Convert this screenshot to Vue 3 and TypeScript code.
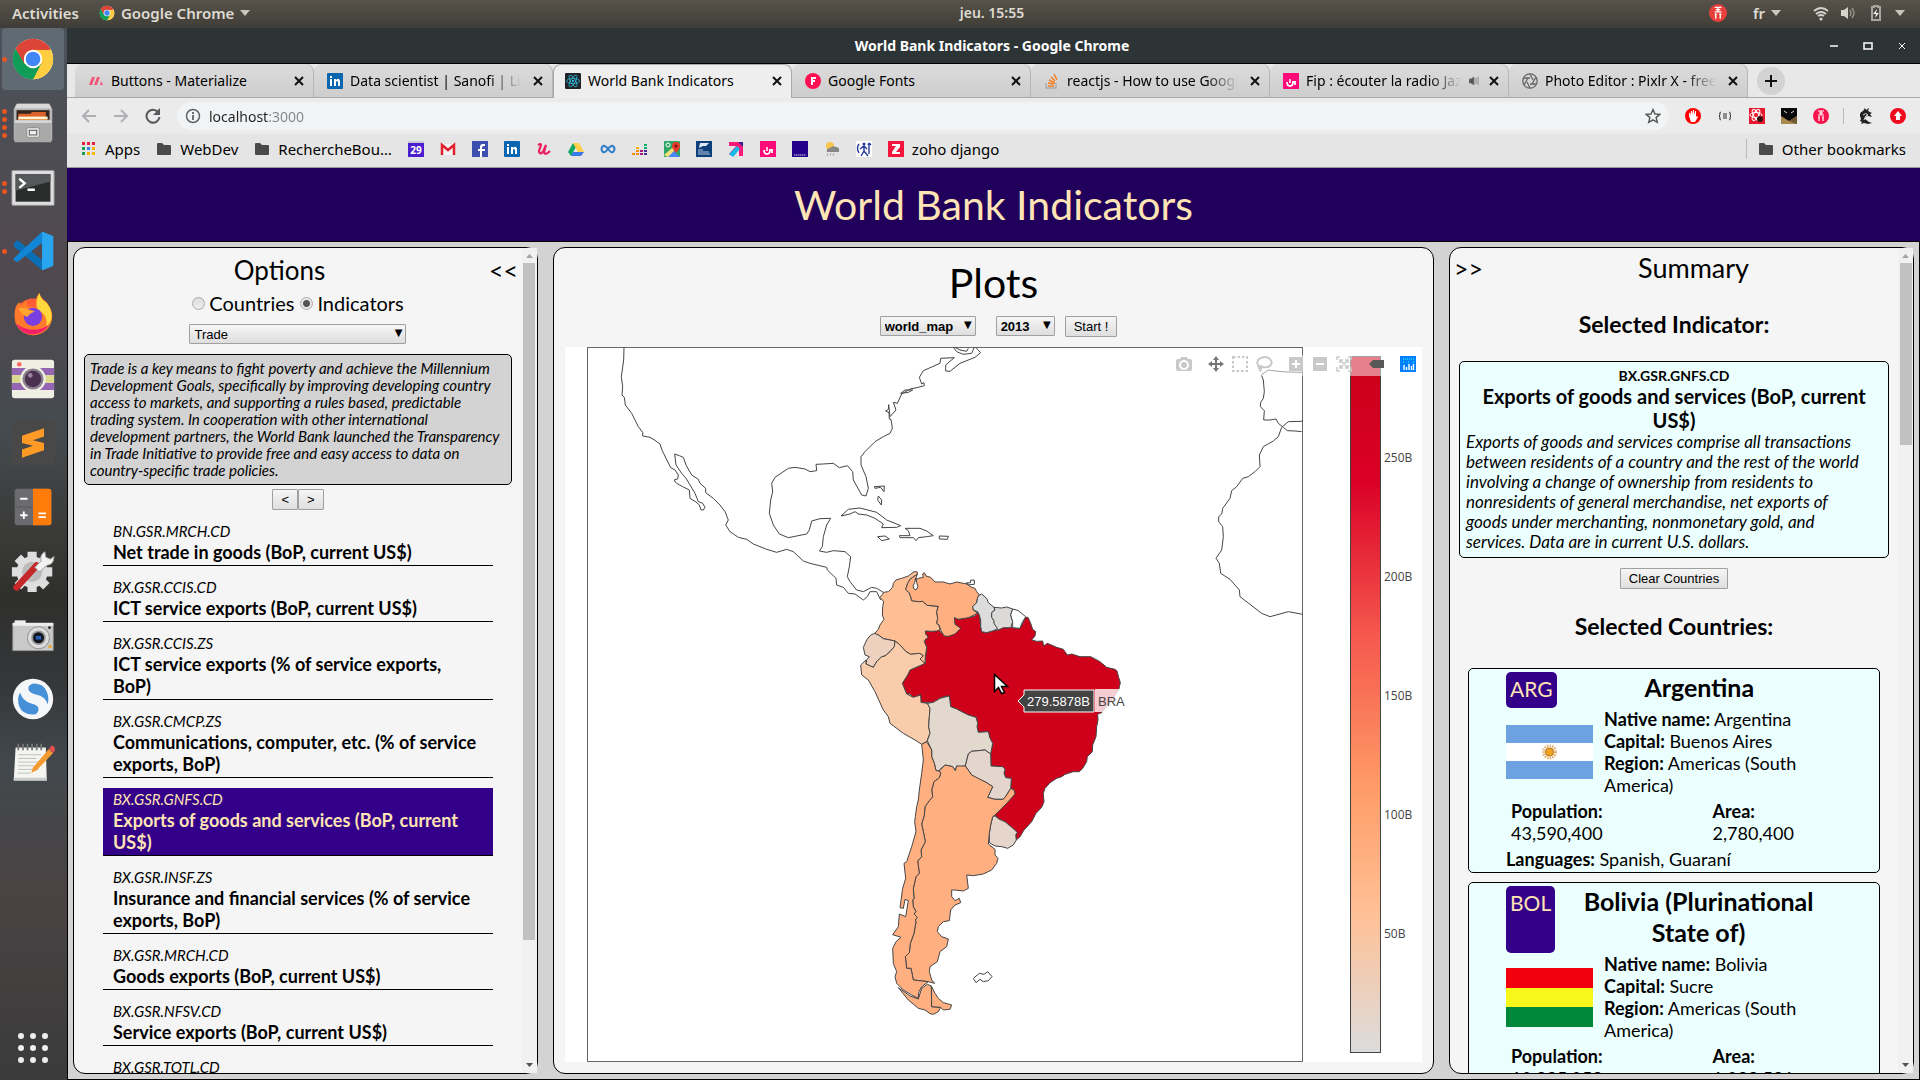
<script setup lang="ts">
import { ref } from 'vue'

interface DockItem { name: string; windows: number; art: string }
interface Tab { title: string; art: string; active?: boolean; fades?: boolean; sound?: boolean }
interface Bookmark { name: string; art: string; label?: string; wide?: boolean }
interface Indicator { code: string; name: string }
interface Country {
  code: string; name: string; native: string; capital: string; region: string[]
  population: string; area: string; languages: string; flag: string; flagBox: string
}

const chromeArt =
  '<circle cx="24" cy="24" r="22" fill="#fff"/><path d="M24 24 4.900 13A22 22 0 0 1 43 13z" fill="#db4437"/><path d="M24 24 43 13A22 22 0 0 1 24 46z" fill="#ffcd40"/><path d="M24 24 43.500 14H24L14 29 24 46 34 29z" fill="#ffcd40"/><path d="M5 13A22 22 0 0 0 24 46L33 29 24 33 14.500 29z" fill="#0f9d58"/><path d="M5 13A22 22 0 0 1 43 14H24L15 20 14 29z" fill="#db4437"/><path d="M5 13 15 30 19 35 29 36 24 46A22 22 0 0 1 5 13z" fill="#0f9d58"/><circle cx="24" cy="24" r="10" fill="#fff"/><circle cx="24" cy="24" r="8" fill="#4285f4"/>'

const folderArt = '<path d="M1 3q0-1 1-1h4l2 2h6q1 0 1 1v8q0 1-1 1H2q-1 0-1-1z" fill="#4a4a4a"/>'
const fipArt = '<rect width="16" height="16" fill="#ff0a78"/><path d="M4 9q0 4 3 4t3-4h2v3" fill="none" stroke="#fff" stroke-width="1.800"/><path d="M7 6v4" stroke="#fff" stroke-width="1.500"/>'
const linkedinArt = '<rect width="16" height="16" rx="1" fill="#0a66b0"/><path d="M3 6h2v7H3zM3 3h2v2H3zM7 6h2v1q3-3 4 1v5h-2V9q-1-2-2 0v4H7z" fill="#fff"/>'
const meepleArt = '<circle cx="8" cy="8" r="8" fill="#f5144b"/><path d="M5 3h6M8 3v4M5 7h6M6 5h4M6 9v4M10 9v4M5 9h2M9 9h2" stroke="#fff" stroke-width="1.200" fill="none"/>'
const recorderArt = '<circle cx="8" cy="8" r="8" fill="#e8403c"/><path d="M5 3h6M8 3v4M5 7h6M6 5h4M6 9v4M10 9v4M5 9h2M9 9h2" stroke="#fff" stroke-width="1.200" fill="none"/>'

const dock: DockItem[] = [
  { name: 'Google Chrome', windows: 1, art: chromeArt },
  { name: 'Files', windows: 4, art: '<path d="M6 3h36l3 6v34H3V9z" fill="#b9b9b9"/><path d="M7 3h34l3 5H4z" fill="#d9d9d9"/><rect x="6" y="10" width="36" height="12" fill="#33241c"/><path d="M8 14h13l2-2h15v12H8z" fill="#d9632a"/><path d="M8 17h32v3H8z" fill="#fff3d6"/><path d="M7 20h34v4H7z" fill="#f0a04c"/><path d="M4 21h40v24H4z" fill="#a9a9a9"/><path d="M4 21h40v3H4z" fill="#d6d6d6"/><rect x="17" y="29" width="14" height="11" rx="2" fill="#ddd" stroke="#8b8b8b"/><rect x="20" y="32" width="8" height="5" fill="#eee" stroke="#555"/>' },
  { name: 'Terminal', windows: 2, art: '<rect x="1" y="6" width="46" height="38" rx="1" fill="#ddd" stroke="#999"/><rect x="5" y="10" width="38" height="30" fill="#2b2d2d"/><path d="M5 10h38v8L5 28z" fill="#56595a"/><path d="m9 15 6 5-6 5M18 27h8" fill="none" stroke="#fff" stroke-width="2.500"/>' },
  { name: 'Visual Studio Code', windows: 1, art: '<path d="M34 3 46 8v32l-12 5z" fill="#2aa6f0"/><path d="M3 16 7 12 34 34v11L3 19z" fill="#0b6fb8"/><path d="M3 32 34 3v12L7 36 3 34z" fill="#1286d6"/><path d="M34 3 46 8v32l-12 5z" fill="#2aa6f0"/>' },
  { name: 'Firefox', windows: 0, art: '<circle cx="24" cy="26" r="20" fill="#ff5a36"/><path d="M4 26Q3 15 9 10l3 4q2-5 5-6l1 6 9 2q-2-10 4-16 2 6 7 9 7 8 7 17A21 20 0 0 1 24 46Q10 45 5 33z" fill="#ff7a2b"/><path d="M31 0q1 7 8 11 7 9 5 18-2 6-6 9 4-13-9-20-3-9 2-18z" fill="#ffd83d"/><circle cx="24" cy="26" r="10" fill="#7a3fe0"/><path d="M8 17q9-2 11 1l7 2q-5 2-8 6-6-1-10-9z" fill="#ffa531"/><path d="M5 33q7 13 20 12 11-1 17-11-8 6-18 6T5 33z" fill="#f31f6a"/>' },
  { name: 'Screenshot', windows: 0, art: '<rect x="1" y="3" width="46" height="42" rx="3" fill="#efefe4"/><path d="M1 12h46v8H1zM1 28h46v8H1z" fill="#9465b3"/><path d="M1 20h46v8H1z" fill="#dbd98b"/><circle cx="9" cy="8" r="2.500" fill="#f66"/><circle cx="24" cy="24" r="14" fill="#efefe4"/><circle cx="24" cy="24" r="11.500" fill="#8c7f8f"/><circle cx="24" cy="24" r="9" fill="#4a3150"/><circle cx="21" cy="20" r="2.500" fill="#9c86a3"/>' },
  { name: 'Sublime Text', windows: 0, art: '<rect width="48" height="48" rx="4" fill="#484848"/><path d="m12 16 24-8v9l-12 4 12 3v8L12 40v-9l12-4-12-3z" fill="#ff9a26"/>' },
  { name: 'Calculator', windows: 0, art: '<rect x="4" y="4" width="40" height="40" rx="3" fill="#6b6b70"/><path d="M24 4h17q3 0 3 3v34q0 3-3 3H24z" fill="#ff7b0a"/><path d="M4 24h20" stroke="#55555a"/><path d="M10 15h8M10 33h8M14 29v8M30 31h8M30 35h8" stroke="#fff" stroke-width="2"/>' },
  { name: 'Settings', windows: 0, art: '<g fill="#dedede"><circle cx="23" cy="25" r="17"/><path d="M18 3h10v44H18zM1 20h44v10H1z"/><path d="M18 3h10v44H18z" transform="rotate(45 23 25)"/><path d="M18 3h10v44H18z" transform="rotate(-45 23 25)"/></g><circle cx="23" cy="25" r="11" fill="#bcbcbc"/><path d="M6 42 28 18" stroke="#c4282a" stroke-width="7" stroke-linecap="round"/><path d="m26 20 7-7q-2-7 4-10l1 6 5 2 4-3q0 9-8 10l-8 7z" fill="#f2f2f2" stroke="#999"/>' },
  { name: 'Camera', windows: 0, art: '<path d="M2 11h44v30H2z" fill="#c9c9c9" stroke="#999"/><path d="M4 8h12v3H4z" fill="#eee"/><path d="M2 11h44v3H2z" fill="#eee"/><circle cx="30" cy="27" r="12" fill="#ddd" stroke="#888"/><circle cx="30" cy="27" r="8" fill="#999"/><circle cx="30" cy="27" r="6" fill="#10151f"/><path d="M27 25h6v4h-6z" fill="#245fb0"/><path d="M41 35h3v3h-3z" fill="#f0a020"/><circle cx="42" cy="16" r="1.500" fill="#222"/>' },
  { name: 'Simplenote', windows: 0, art: '<circle cx="24" cy="24" r="22" fill="#f4f6f8"/><path d="M24 7q12 0 15 9 3 7 1 14-2-9-13-11-9-2-8-8 1-3 5-4z" fill="#4690d8"/><path d="M24 41Q12 41 9 32q-3-8 1-15 2 9 12 12 9 2 8 7t-6 5z" fill="#4690d8"/>' },
  { name: 'Notes', windows: 0, art: '<path d="M5 7h33l1 36H3z" fill="#f4f4f0"/><path d="M3 40h36v3H3z" fill="#ccc"/><path d="M8 3v7M13 3v7M18 3v7M23 3v7M28 3v7M33 3v7" stroke="#777" stroke-width="2"/><path d="M8 15h25M8 19h20M8 23h24M8 27h17M8 31h22M7 35h14" stroke="#bbb"/><path d="m24 29 17-20 5 4-18 19-6 3z" fill="#f29a30"/><path d="m41 9 3-4q4 0 4 5l-2 3z" fill="#e05050"/>' },
]

const tabs: Tab[] = [
  { title: 'Buttons - Materialize', art: '<path d="M1 12 4 4h3L4 12zM6 12 9 4h3L9 12zM12 12l1-4 2 4z" fill="#f5557b"/>' },
  { title: 'Data scientist | Sanofi | LinkedIn', fades: true, art: linkedinArt },
  { title: 'World Bank Indicators', active: true, art: '<rect width="16" height="16" rx="1" fill="#20232a"/><g fill="none" stroke="#2fb7d6" stroke-width=".8"><ellipse cx="8" cy="8" rx="6.500" ry="2.500"/><ellipse cx="8" cy="8" rx="6.500" ry="2.500" transform="rotate(60 8 8)"/><ellipse cx="8" cy="8" rx="6.500" ry="2.500" transform="rotate(120 8 8)"/></g><circle cx="8" cy="8" r="1.200" fill="#2fb7d6"/>' },
  { title: 'Google Fonts', art: '<circle cx="8" cy="8" r="8" fill="#ff1053"/><path d="M6 12V4h5v2H8v1h2v2H8v3z" fill="#fff"/>' },
  { title: 'reactjs - How to use Google Fonts', fades: true, art: '<path d="M2 10v5h10v-5" fill="none" stroke="#aaa" stroke-width="1.500"/><path d="M4 13h6M4 10l6 1M5 7l6 3M7 4l4 4M10 1l3 6" stroke="#f48024" stroke-width="1.500"/>' },
  { title: 'Fip : écouter la radio Jazz', fades: true, sound: true, art: fipArt },
  { title: 'Photo Editor : Pixlr X - free image', fades: true, art: '<g fill="none" stroke="#666" stroke-width="1.300"><circle cx="8" cy="8" r="7.200"/><path d="M8 1 11 7M14 4l-4 7M14 11H8M8 15 5 9M2 12l4-7M2 5h6"/></g>' },
]

const bookmarks: Bookmark[] = [
  { name: 'Apps', label: 'Apps', wide: true, art: '<path d="M1 1h3v3H1zM6 1h3v3H6z" fill="#e8203c"/><path d="M11 1h3v3h-3z" fill="#e8203c"/><path d="M1 6h3v3H1z" fill="#18a050"/><path d="M6 6h3v3H6z" fill="#3f80f0"/><path d="M11 6h3v3h-3zM6 11h3v3H6zM11 11h3v3h-3z" fill="#f8b400"/><path d="M1 11h3v3H1z" fill="#18a050"/>' },
  { name: 'WebDev', label: 'WebDev', wide: true, art: folderArt },
  { name: 'RechercheBoulot', label: 'RechercheBou…', wide: true, art: folderArt },
  { name: 'Calendar', art: '<rect y="1" width="16" height="15" fill="#4b1fd0"/><path d="M0 0h16v2H0z" fill="#c9c9d8"/><text x="8" y="13" text-anchor="middle" font-family="Noto Sans, sans-serif" font-size="10" font-weight="700" fill="#fff">29</text>' },
  { name: 'Gmail', art: '<path d="M1 3h14v11H1z" fill="#f4f4f4"/><path d="M2 14V4l6 5 6-5v10" fill="none" stroke="#e0202f" stroke-width="2.500"/>' },
  { name: 'Facebook', art: '<rect width="16" height="16" fill="#3d50b0"/><path d="M8 16v-6H6V8h2V6q0-3 3-3h2v2h-1q-2 0-2 2v1h3v2h-3v6z" fill="#fff"/>' },
  { name: 'LinkedIn', art: linkedinArt },
  { name: 'Udemy', art: '<path d="M2 4q3-2 3 0L3 10q0 4 4 1l3-7-2 7q1 4 6-1" fill="none" stroke="#ee1f60" stroke-width="2.200"/>' },
  { name: 'Drive', art: '<path d="m5 2-5 9 3 4 5-9z" fill="#11a861"/><path d="M5 2h6l5 9h-6z" fill="#ffcf48"/><path d="M3 15h10l3-4H5z" fill="#3b78e7"/>' },
  { name: 'Codingame', art: '<path d="M8 8Q5 4 3 5q-3 3 0 6 2 1 5-3 3-4 5-3 3 3 0 6-2 1-5-3z" fill="none" stroke="#2f7ec8" stroke-width="2"/>' },
  { name: 'Deezer', art: '<path d="M0 12h3v2H0zM4 12h3v2H4zM4 9h3v2H4z" fill="#ff8a00"/><path d="M4 6h3v2H4z" fill="#ffb000"/><path d="M8 12h3v2H8zM8 9h3v2H8z" fill="#a01a80"/><path d="M12 12h3v2h-3zM12 9h3v2h-3z" fill="#4a2f9a"/><path d="M12 6h3v2h-3zM12 3h3v2h-3z" fill="#10b070"/>' },
  { name: 'Maps', art: '<rect width="16" height="16" rx="1" fill="#2fa565"/><path d="m3 16 6-7 7 7z" fill="#4486f4"/><path d="M0 14 14 2l2 2L4 16z" fill="#f9e27a"/><path d="M12 1q4 0 4 4 0 3-4 7-4-4-4-7 0-4 4-4z" fill="#e33b2e"/><circle cx="12" cy="5" r="1.500" fill="#801010"/><circle cx="4" cy="4" r="2" fill="none" stroke="#fff"/>' },
  { name: 'La Banque Postale', art: '<rect width="16" height="16" fill="#0d3f7a"/><path d="M4 2h9l-3 3H7l-4 2z" fill="#dfe9f5"/><path d="M2 9h5M2 11h11M2 13h12" stroke="#b5c8e0"/>' },
  { name: 'Arrow', art: '<path d="M1 1h14v14h-4V7L5 15l-4-2 7-8H1z" fill="#ff1a7a"/><path d="m1 13 8-8 3 3-7 8z" fill="#18b8e8"/><path d="M10 1h5v5z" fill="#3b1d90"/>' },
  { name: 'Fip', art: fipArt },
  { name: 'Hammer', art: '<rect width="16" height="16" fill="#24008a"/><path d="M2 14h12" stroke="#d0c8f0" stroke-dasharray="1.500 .5"/>' },
  { name: 'Weather', art: '<circle cx="6" cy="5" r="4" fill="#f7c64a"/><path d="M3 11q-1-4 3-4 2-3 6-1 4 0 3 5z" fill="#888"/><path d="m4 12-1 3M7 12l-1 3M10 12l-1 3" stroke="#aaa"/>' },
  { name: 'Runner', art: '<rect width="16" height="16" fill="#fff"/><circle cx="8" cy="3" r="1.500" fill="#253a9a"/><path d="M8 5v5l-3 5M8 10l4 5M4 8l4-3 3 3M3 3q-3 4 0 9M13 13V2l-1 2M13 2l2 2" fill="none" stroke="#253a9a" stroke-width="1.400"/>' },
  { name: 'zoho django', label: 'zoho django', wide: true, art: '<rect width="16" height="16" fill="#f5143c"/><path d="M4 3h8v3l-4 5h4v2H4v-2l4-6H4z" fill="#fff"/>' },
]

const extensions: Bookmark[] = [
  { name: 'Ad block', art: '<circle cx="8" cy="8" r="8" fill="#f00"/><path d="M4 8V5h1v3l1-5h1v4l1-5h1v5l1-4h1v6l1-1 1 1-3 5H6z" fill="#fff"/>' },
  { name: 'JSON view', art: '<path d="M4 4Q2 4 3 7L2 8l1 1q-1 3 1 3M12 4q2 0 1 3l1 1-1 1q1 3-1 3M6 6h4M6 8h4M6 10h4" fill="none" stroke="#333"/>' },
  { name: 'React tools', art: '<rect width="16" height="16" fill="#e8182e"/><g fill="none" stroke="#fff"><ellipse cx="7" cy="7" rx="6" ry="2.500"/><ellipse cx="7" cy="7" rx="6" ry="2.500" transform="rotate(60 7 7)"/><ellipse cx="7" cy="7" rx="6" ry="2.500" transform="rotate(120 7 7)"/></g><circle cx="11" cy="11" r="3" fill="#301010"/>' },
  { name: 'Fox', art: '<rect width="16" height="16" fill="#0a0a0a"/><path d="m0 8 8 5 8-5v8H0z" fill="#a8894e"/><path d="m8 13 8-5v8z" fill="#6e5830"/><path d="m3 3 3 2M13 3l-3 2" stroke="#ddd"/>' },
  { name: 'Meeple', art: meepleArt },
]

const indicators: Indicator[] = [
  { code: 'BN.GSR.MRCH.CD', name: 'Net trade in goods (BoP, current US$)' },
  { code: 'BX.GSR.CCIS.CD', name: 'ICT service exports (BoP, current US$)' },
  { code: 'BX.GSR.CCIS.ZS', name: 'ICT service exports (% of service exports,\nBoP)' },
  { code: 'BX.GSR.CMCP.ZS', name: 'Communications, computer, etc. (% of service\nexports, BoP)' },
  { code: 'BX.GSR.GNFS.CD', name: 'Exports of goods and services (BoP, current\nUS$)' },
  { code: 'BX.GSR.INSF.ZS', name: 'Insurance and financial services (% of service\nexports, BoP)' },
  { code: 'BX.GSR.MRCH.CD', name: 'Goods exports (BoP, current US$)' },
  { code: 'BX.GSR.NFSV.CD', name: 'Service exports (BoP, current US$)' },
  { code: 'BX.GSR.TOTL.CD', name: 'Exports of goods, services and primary income' },
]

const topicText = `Trade is a key means to fight poverty and achieve the Millennium
Development Goals, specifically by improving developing country
access to markets, and supporting a rules based, predictable
trading system. In cooperation with other international
development partners, the World Bank launched the Transparency
in Trade Initiative to provide free and easy access to data on
country-specific trade policies.`

const indicatorText = `Exports of goods and services comprise all transactions
between residents of a country and the rest of the world
involving a change of ownership from residents to
nonresidents of general merchandise, net exports of
goods under merchanting, nonmonetary gold, and
services. Data are in current U.S. dollars.`

const countries: Country[] = [
  {
    code: 'ARG', name: 'Argentina', native: 'Argentina', capital: 'Buenos Aires', region: ['Americas (South', 'America)'],
    population: '43,590,400', area: '2,780,400', languages: 'Spanish, Guaraní', flagBox: '0 0 87 54',
    flag: '<path d="M0 0h87v54H0z" fill="#6ca2e0"/><path d="M0 18h87v18H0z" fill="#fff"/><circle cx="43.500" cy="27" r="6" fill="none" stroke="#e3b27a" stroke-width="3" stroke-dasharray="1.500 1"/><circle cx="43.500" cy="27" r="4" fill="#f2a51e" stroke="#b9741c"/>',
  },
  {
    code: 'BOL', name: 'Bolivia (Plurinational\nState of)', native: 'Bolivia', capital: 'Sucre', region: ['Americas (South', 'America)'],
    population: '10,985,059', area: '1,098,581', languages: 'Spanish, Aymara, Quechua', flagBox: '0 0 87 59',
    flag: '<path d="M0 0h87v59H0z" fill="#f3000f"/><path d="M0 20h87v39H0z" fill="#f7f71c"/><path d="M0 39h87v20H0z" fill="#00883a"/>',
  },
]

/* Country outlines, drawn at three units per plot pixel. */
const lands = [
  { id: 'BRA', fill: '#ce001a', d: 'M557 172 564 172 572 190 578 208 587 215 585 228 575 240 590 244 608 243 611 258 622 250 650 262 670 268 682 285 695 282 720 290 752 290 780 305 800 322 825 328 831 333 836 352 841 368 836 390 820 415 800 440 785 458 773 462 774 480 770 500 768 530 758 555 757 575 742 590 740 605 728 625 718 635 700 635 675 643 665 650 650 655 630 668 615 685 610 700 612 725 605 742 588 760 575 785 552 810 540 830 529 840 527 825 532 817 515 802 495 785 478 778 465 765 480 748 500 730 525 702 522 690 512 685 514 655 497 653 492 640 495 628 488 620 453 618 452 580 458 550 450 535 445 515 415 517 411 500 413 490 408 472 385 465 365 455 350 447 332 440 328 408 315 409 300 415 280 427 243 427 242 405 220 412 210 402 200 402 187 370 203 345 210 330 240 317 255 310 260 262 253 245 256 238 265 232 257 222 256 213 275 214 297 210 303 218 325 229 345 222 362 205 345 193 343 173 355 178 385 173 405 168 413 155 418 165 420 180 422 200 425 215 440 218 460 212 475 210 487 202 500 204 512 201 525 205 540 205 548 190z' },
  { id: 'COL', fill: '#ffbf95', d: 'M130 97 145 95 158 82 160 70 168 60 185 55 205 48 222 35 232 36 232 43 218 52 210 58 203 70 197 88 207 98 212 110 215 122 235 125 248 124 262 136 295 139 290 155 293 175 290 190 297 195 300 210 290 213 275 214 256 213 257 222 265 232 256 238 253 245 260 262 256 290 255 310 248 305 240 297 250 287 238 280 212 283 198 275 180 255 165 243 150 240 130 236 115 225 104 220 115 208 120 195 132 178 127 165 128 140 131 125 120 112 128 103z' },
  { id: 'VEN', fill: '#ffaf80', d: 'M232 43 218 52 210 58 203 70 197 88 207 98 212 110 215 122 235 125 248 124 262 136 295 139 290 155 293 175 290 190 297 195 303 212 312 228 325 229 345 222 362 205 345 193 343 173 355 178 385 173 413 160 400 150 398 140 410 128 413 112 418 105 410 95 405 85 395 82 380 72 350 66 330 72 310 66 285 66 272 52 258 48 253 38 248 42 250 52 235 55 225 60z' },
  { id: 'GUY', fill: '#dcdcdc', d: 'M418 105 425 102 440 115 445 128 462 142 465 150 455 158 455 172 462 182 463 190 475 205 460 212 440 218 425 215 422 200 422 180 418 165 413 155 400 150 398 140 410 128 413 112z' },
  { id: 'SUR', fill: '#dbdad9', d: 'M462 142 485 144 500 141 518 147 512 165 518 185 512 203 490 203 475 210 462 190 462 182 455 172 455 158 465 150z' },
  { id: 'GUF', fill: '#fff', d: 'M518 147 535 152 557 170 545 190 540 205 518 203 518 185 512 165z' },
  { id: 'ECU', fill: '#edd0be', d: 'M104 220 115 225 130 236 150 240 165 243 163 260 150 275 135 288 125 290 110 305 100 322 90 318 78 312 80 300 88 290 75 285 70 262 80 240 92 225z' },
  { id: 'PER', fill: '#f9ccac', d: 'M165 243 180 255 198 275 212 283 238 280 250 287 240 297 255 310 240 317 210 330 203 345 187 370 200 402 220 412 242 405 243 427 262 430 270 445 268 470 266 500 270 520 260 545 245 553 225 540 190 520 150 490 145 470 130 450 105 395 85 360 65 345 62 315 78 300 78 312 100 322 110 305 125 290 135 288 150 275 163 260z' },
  { id: 'BOL', fill: '#e2d8ce', d: 'M262 430 280 427 300 415 328 408 332 440 350 447 365 455 385 465 408 472 413 490 411 500 415 517 445 515 450 535 458 550 452 582 435 570 395 574 385 582 376 618 360 620 350 618 346 632 338 620 315 615 300 628 298 633 288 632 283 610 275 590 275 570 262 542 270 520 266 500 268 470 270 445z' },
  { id: 'PRY', fill: '#e4d6cd', d: 'M385 582 395 574 435 570 452 582 453 618 488 620 495 628 492 640 497 653 514 655 512 685 500 705 490 718 465 718 443 712 458 680 440 668 410 655 395 645 376 618z' },
  { id: 'URY', fill: '#e6d5ca', d: 'M465 768 478 778 495 785 515 802 532 817 527 825 529 840 520 855 503 865 485 860 465 858 448 848 448 820 452 795 458 770z' },
  { id: 'ARG', fill: '#ffaf80', d: 'M298 633 315 615 338 620 346 632 350 618 376 618 395 645 440 668 458 680 443 712 465 718 490 718 500 705 512 685 522 690 525 702 500 730 465 765 458 770 452 795 448 820 445 852 465 868 465 885 474 895 470 910 455 930 430 942 400 947 380 945 385 985 370 993 345 990 335 990 335 1010 345 1022 358 1015 362 1028 345 1035 332 1050 328 1082 310 1085 295 1100 292 1115 305 1130 325 1137 320 1160 300 1175 292 1205 270 1220 268 1235 275 1260 284 1270 265 1265 220 1260 213 1225 200 1225 196 1190 208 1178 211 1150 222 1120 228 1085 226 1080 232 1072 222 1062 228 1055 220 1040 218 1020 222 1015 220 985 228 950 238 940 233 903 245 890 243 870 256 845 250 815 245 792 253 765 255 740 268 722 278 710 275 690 282 665 298 653 302 640z' },
  { id: 'CHL', fill: '#ffaf80', d: 'M260 545 275 570 275 590 283 610 288 632 298 633 302 640 298 653 282 665 275 690 278 710 268 722 255 740 253 765 245 792 250 815 256 845 243 870 245 890 233 903 238 940 228 950 220 985 222 1015 218 1020 220 1040 228 1055 222 1062 232 1072 226 1080 228 1085 222 1120 211 1150 208 1178 196 1190 200 1225 213 1225 220 1260 265 1265 245 1280 237 1295 234 1315 215 1305 190 1290 170 1270 165 1250 170 1235 160 1210 158 1165 168 1145 183 1132 158 1124 175 1100 178 1062 197 1070 205 1022 195 1018 190 1045 180 1043 188 985 197 955 192 910 200 905 215 860 228 815 224 785 226 770 230 740 235 720 238 690 245 640 250 600 247 570 245 553z' },
  { id: 'CHL-TDF', fill: '#ffaf80', d: 'M175 1283 210 1308 235 1317 245 1285 262 1273 274 1278 275 1340 302 1342 295 1355 280 1363 270 1361 255 1350 235 1345 205 1320z' },
  { id: 'ARG-TDF', fill: '#ffaf80', d: 'M274 1278 285 1300 295 1315 310 1328 335 1335 330 1348 310 1350 302 1342 275 1340z' },
  { id: 'FLK', fill: '#fff', d: 'M400 1255 418 1240 432 1243 443 1235 456 1250 445 1262 430 1265 420 1258 408 1268z' },
  { id: 'MAR', fill: '#fff', d: 'M228 54 224 68 219 78 222 87 228 90 234 80 230 68z' },
  { id: 'TTO', fill: '#fff', d: 'M378 69 392 68 391 61 403 60 403 73 388 74z' },
]

const northCoasts = [
  'M192 322 191 360 184 410 188 440 186 465 193 472 196 495 215 520 235 560 248 577 248 588 270 592 282 599 300 612 306 630 318 655 332 683 345 690 355 705 353 717 342 720 350 730 368 740 388 750 390 775 408 786 418 795 423 810 430 810 435 802 428 790 415 785 405 760 390 735 378 715 365 700 348 675 344 642 358 647 370 652 378 675 395 705 415 718 420 730 437 745 437 758 460 775 480 795 495 815 505 840 497 855 510 875 535 892 560 898 580 912 620 928 650 937 680 928 700 935 730 963 750 970 800 982 802 990 828 1015 830 1035 850 1042 865 1060 885 1062 910 1080 922 1070 930 1055 950 1055 962 1080',
  'M970 1057 950 1045 935 1042 910 1055 890 1050 870 1025 862 1010 868 980 872 950 855 935 820 932 800 937 778 933 787 920 790 890 800 855 812 835 780 836 755 843 748 870 740 882 685 893 658 882 640 855 628 820 632 780 638 755 635 730 645 712 685 685 705 682 735 687 750 695 770 692 768 673 790 672 820 670 838 683 862 677 878 695 880 720 905 765 918 768 925 745 918 710 903 675 903 650 915 635 945 605 970 590 990 580 997 565 993 538 988 537 987 518 977 513 985 508 986 494 990 530 1008 510 1000 487 1012 490 1025 462 1050 447 1075 442 1093 437 1092 428 1085 432 1078 412 1090 392 1140 370 1142 355 1183 353 1157 375 1157 393 1170 394 1200 370 1245 352 1262 338 1247 322',
  'M1022 460 1035 450 1058 450 1045 457z',
  'M1180 322 1190 335 1210 343 1235 340 1243 322M1185 322 1200 330 1220 334 1225 325',
  'M843 828 865 808 900 804 950 817 980 840 1022 857 1010 862 965 863 970 852 945 835 920 825 895 822 885 815 870 822z',
  'M1035 865 1080 865 1100 873 1120 887 1100 890 1075 893 1068 902 1060 893 1020 893 1018 887 1050 887 1045 872z',
  'M953 890 975 888 988 897 965 902zM1138 888 1165 889 1162 898 1138 897z',
  'M943 740 973 738 972 755 962 742 945 745zM955 768 965 780 964 795 953 780z',
]

const africaCoasts = [
  'M784 405 805 390 835 394 860 396 908 397M784 405 790 420 793 455 790 475 782 487 781 500 793 512 791 540 810 540 828 537 835 550 850 562 862 572 885 573 905 575',
  'M908 540 905 544 865 545 845 562 835 590 820 603 790 620 778 645 780 680 765 695 745 710 728 715 710 740 695 752 690 775 668 805 665 822 656 830 656 845 668 860 670 890 665 930 648 955 658 970 662 1000 690 1018 718 1050 720 1070 750 1093 785 1120 810 1130 865 1115 908 1123',
]

const ticks = [
  { label: '250B', y: 462 }, { label: '200B', y: 581 }, { label: '150B', y: 700 },
  { label: '100B', y: 819 }, { label: '50B', y: 938 },
]

const mode = ref('indicators')
const selectedCode = ref('BX.GSR.GNFS.CD')
const address = ref('localhost:3000')
</script>

<template>
  <div class="desktop">
    <header class="topbar">
      <div class="top-left">
        <button class="top-item">Activities</button>
        <button class="top-item">
          <svg width="16" height="16" viewBox="0 0 48 48" v-html="chromeArt" />
          Google Chrome
          <svg width="10" height="6" viewBox="0 0 10 6"><path d="M0 0h10L5 6z" fill="#c9c6c0" /></svg>
        </button>
      </div>
      <time class="top-item clock">jeu. 15:55</time>
      <div class="top-right">
        <svg class="recorder" width="18" height="18" viewBox="0 0 16 16" v-html="recorderArt" />
        <button class="top-item lang">fr <svg width="10" height="6" viewBox="0 0 10 6"><path d="M0 0h10L5 6z" fill="#c9c6c0" /></svg></button>
        <svg width="16" height="16" viewBox="0 0 16 16"><path d="M1 6q7-6 14 0M3 9q5-4 10 0M5 11q3-2 6 0" fill="none" stroke="#d6d3cd" stroke-width="1.800" /><circle cx="8" cy="14" r="1.600" fill="#d6d3cd" /></svg>
        <svg width="16" height="16" viewBox="0 0 16 16"><path d="M0 5h3l4-3v12l-4-3H0z" fill="#d6d3cd" /><path d="M9 5q2 3 0 6M11 3q4 5 0 10" fill="none" stroke="#918e88" stroke-width="1.500" /></svg>
        <svg width="14" height="16" viewBox="0 0 14 16"><path d="M3 2h2V1h4v1h2v13H3z" fill="none" stroke="#a8a5a0" stroke-width="2" /><path d="M8 4 4 9h3l-1 4 4-5H7z" fill="#eee" /></svg>
        <svg width="10" height="6" viewBox="0 0 10 6"><path d="M0 0h10L5 6z" fill="#c9c6c0" /></svg>
      </div>
    </header>

    <div class="workspace">
      <nav class="dock">
        <button v-for="(item, i) in dock" :key="item.name" class="dock-item" :class="{ current: i === 0 }" :aria-label="item.name">
          <span class="dots"><i v-for="n in item.windows" :key="n" /></span>
          <svg width="44" height="44" viewBox="0 0 48 48" v-html="item.art" />
        </button>
        <button class="dock-item apps" aria-label="Show applications">
          <svg width="32" height="32" viewBox="0 0 32 32" fill="#eee">
            <g v-for="y in [4, 16, 28]" :key="y"><circle v-for="x in [4, 16, 28]" :key="x" :cx="x" :cy="y" r="3" /></g>
          </svg>
        </button>
      </nav>

      <main class="window">
        <div class="titlebar">
          <span class="window-title">World Bank Indicators - Google Chrome</span>
          <div class="window-buttons">
            <button aria-label="Minimise"><svg width="10" height="10" viewBox="0 0 10 10"><path d="M1 5h8" stroke="#fff" stroke-width="1.500" /></svg></button>
            <button aria-label="Maximise"><svg width="10" height="10" viewBox="0 0 10 10"><path d="M1 2h8v6H1z" fill="none" stroke="#fff" stroke-width="1.500" /></svg></button>
            <button aria-label="Close"><svg width="10" height="10" viewBox="0 0 10 10"><path d="m2 2 6 6M8 2 2 8" stroke="#fff" /></svg></button>
          </div>
        </div>

        <div class="tabstrip">
          <button v-for="tab in tabs" :key="tab.title" class="tab" :class="{ active: tab.active }">
            <svg width="16" height="16" viewBox="0 0 16 16" v-html="tab.art" />
            <span class="tab-title" :class="{ fades: tab.fades }">{{ tab.title }}</span>
            <svg v-if="tab.sound" class="sound" width="10" height="10" viewBox="0 0 10 10"><path d="M0 3h2l3-2v8L2 7H0zM7 2v6M9 1v8" fill="#555" stroke="#777" stroke-width=".8" /></svg>
            <svg class="tab-close" width="10" height="10" viewBox="0 0 10 10"><path d="m1 1 8 8M9 1 1 9" stroke="#111" stroke-width="2" /></svg>
          </button>
          <button class="new-tab" aria-label="New tab"><svg width="12" height="12" viewBox="0 0 12 12"><path d="M6 0v12M0 6h12" stroke="#111" stroke-width="2" /></svg></button>
        </div>

        <div class="toolbar">
          <button aria-label="Back"><svg width="16" height="16" viewBox="0 0 16 16"><path d="M15 8H2M8 2 2 8l6 6" fill="none" stroke="#aeb0b3" stroke-width="2" /></svg></button>
          <button aria-label="Forward"><svg width="16" height="16" viewBox="0 0 16 16"><path d="M1 8h13M8 2l6 6-6 6" fill="none" stroke="#aeb0b3" stroke-width="2" /></svg></button>
          <button aria-label="Reload"><svg width="16" height="16" viewBox="0 0 16 16"><path d="M13 4A6.500 6.500 0 1 0 14.500 9" fill="none" stroke="#55585c" stroke-width="2" /><path d="M15 0v7H8z" fill="#55585c" /></svg></button>
          <div class="omnibox">
            <svg width="16" height="16" viewBox="0 0 16 16"><circle cx="8" cy="8" r="6.500" fill="none" stroke="#5f6368" stroke-width="1.500" /><path d="M8 7v5M8 4v2" stroke="#5f6368" stroke-width="1.800" /></svg>
            <input v-model="address" class="address" aria-label="Address" />
            <svg width="16" height="16" viewBox="0 0 16 16"><path d="m8 1.500 2 4.500 4.800.4-3.700 3.200 1.200 4.800L8 11.900l-4.300 2.500 1.200-4.800L1.200 6.400 6 6z" fill="none" stroke="#555" stroke-width="1.400" /></svg>
          </div>
          <div class="extensions">
            <svg v-for="ext in extensions" :key="ext.name" width="16" height="16" viewBox="0 0 16 16" v-html="ext.art" />
            <span class="rule" />
            <svg width="16" height="18" viewBox="0 0 16 18"><path d="M3 12Q0 6 5 4l2-3 1 2 3-2-1 3 4 2-2 1 2 3-4-1q-3 0-3 3l4 3 3 1-4 1-4-1-3 1 1-2-2-1z" fill="#222" /><path d="M5 8q3-3 5 0-3 0-4 5" fill="none" stroke="#ddd" /></svg>
            <svg width="16" height="16" viewBox="0 0 16 16"><circle cx="8" cy="8" r="8" fill="#f00a1e" /><path d="m8 3 4 5h-2v4H6V8H4z" fill="#fff" /></svg>
          </div>
        </div>

        <div class="bookmarks">
          <a v-for="mark in bookmarks" :key="mark.name + mark.label" href="#" class="bookmark" :class="{ wide: mark.wide }" :aria-label="mark.name">
            <svg width="16" height="16" viewBox="0 0 16 16" v-html="mark.art" />
            <span v-if="mark.label">{{ mark.label }}</span>
          </a>
          <a href="#" class="bookmark other"><svg width="16" height="16" viewBox="0 0 16 16" v-html="folderArt" /><span>Other bookmarks</span></a>
        </div>

        <section class="page">
          <h1 class="banner">World Bank Indicators</h1>
          <div class="columns">
            <section class="panel">
              <div class="scroll-area">
                <div class="panel-head options-head">
                  <h2>Options</h2>
                  <button class="fold">&lt;&lt;</button>
                </div>
                <div class="modes">
                  <label><input v-model="mode" type="radio" name="mode" value="countries" />Countries</label>
                  <label><input v-model="mode" type="radio" name="mode" value="indicators" />Indicators</label>
                </div>
                <div class="picker topic">
                  <select aria-label="Topic"><option>Trade</option></select>
                </div>
                <p class="topic-text">{{ topicText }}</p>
                <div class="pager"><button class="btn">&lt;</button><button class="btn">&gt;</button></div>
                <ul class="indicators">
                  <li v-for="item in indicators" :key="item.code" :class="{ chosen: item.code === selectedCode }" @click="selectedCode = item.code">
                    <em>{{ item.code }}</em>
                    <strong>{{ item.name }}</strong>
                  </li>
                </ul>
              </div>
              <div class="scrollbar"><i class="up" /><span class="thumb long" /><i class="down" /></div>
            </section>

            <section class="panel plots">
              <h2>Plots</h2>
              <div class="controls">
                <div class="picker kind"><select aria-label="Plot type"><option>world_map</option></select></div>
                <div class="picker year"><select aria-label="Year"><option>2013</option></select></div>
                <button class="btn">Start !</button>
              </div>
              <div class="plot">
                <svg class="map" viewBox="565 347 857 715" preserveAspectRatio="xMidYMin meet">
                  <defs>
                    <linearGradient id="scale" x1="0" y1="0" x2="0" y2="1">
                      <stop offset="0" stop-color="#ca0017" />
                      <stop offset=".18" stop-color="#da0027" />
                      <stop offset=".4" stop-color="#f5584d" />
                      <stop offset=".62" stop-color="#ff9c67" />
                      <stop offset=".8" stop-color="#ffc096" />
                      <stop offset="1" stop-color="#dcdcdc" />
                    </linearGradient>
                    <clipPath id="frame"><path d="M587 347h716v715H587z" /></clipPath>
                  </defs>
                  <rect x="587.500" y="347.500" width="715" height="714" fill="#fff" stroke="#666" />
                  <g clip-path="url(#frame)" stroke="#444" fill="none" stroke-linejoin="round">
                    <g transform="translate(560 240) scale(.33333)" stroke-width="3">
                      <path v-for="d in northCoasts" :key="d" :d="d" />
                    </g>
                    <g transform="translate(1000 240) scale(.33333)" stroke-width="3">
                      <path v-for="d in africaCoasts" :key="d" :d="d" />
                    </g>
                    <g transform="translate(840 560) scale(.33333)" stroke-width="3">
                      <path v-for="land in lands" :key="land.id" :d="land.d" :fill="land.fill" />
                    </g>
                  </g>
                  <rect x="1350.500" y="356.500" width="30" height="696" fill="url(#scale)" stroke="#444" />
                  <g class="ticks"><text v-for="t in ticks" :key="t.label" x="1384" :y="t.y">{{ t.label }}</text></g>

                  <rect x="1172" y="355" width="246" height="21" fill="#fff" fill-opacity=".5" />
                  <g fill="#c9c9c9">
                    <path d="M1176 361q0-2 2-2h2l1-2h6l1 2h2q2 0 2 2v8q0 2-2 2h-12q-2 0-2-2zm8-1a5 5 0 1 0 0 10 5 5 0 0 0 0-10zm0 2a3 3 0 1 1 0 6 3 3 0 0 1 0-6z" />
                    <path d="M1289 357h14v14h-14zm6 3v3h-3v2h3v3h2v-3h3v-2h-3v-3z" fill-rule="evenodd" />
                    <path d="M1313 357h14v14h-14zm3 6v2h8v-2z" fill-rule="evenodd" />
                  </g>
                  <path d="m1216 356 3 4h-2v3h3v-2l4 3-4 3v-2h-3v3h2l-3 4-3-4h2v-3h-3v2l-4-3 4-3v2h3v-3h-2z" fill="#777" />
                  <path d="M1233 357h14v14h-14z" fill="none" stroke="#c9c9c9" stroke-width="2" stroke-dasharray="2.500 2" />
                  <path d="M1260 368q-5-5-1-9 6-4 11 0 4 5-2 8-4 1-7-1-3 1-2 2l2 1 1-2M1259 370l2 1" fill="none" stroke="#c9c9c9" stroke-width="2" />
                  <path d="M1337 360v-3h3M1348 357h3v3M1351 367v4h-3M1340 371h-3v-4M1340 360l8 8M1348 360l-8 8M1340 363v-3h3M1345 360h3v3M1348 365v3h-3M1343 368h-3v-3" fill="none" stroke="#c9c9c9" stroke-width="1.500" />
                  <path d="m1369 364 4-4h11v8h-11z" fill="#585858" />
                  <path d="M1400 356h16v16h-16z" fill="#0080ff" />
                  <path d="M1404 370v-5M1406.500 370v-3M1409 370v-6M1411.500 370v-4M1413.500 370v-6" stroke="#fff" stroke-width="1.400" />
                  <path d="M1403 359h11M1403 362h2M1408 362h1M1413 362h1" stroke="#20e0f0" stroke-width="1.400" stroke-dasharray="1 1" />

                  <path d="M1095 689h25l-2 10-8 13h-15z" fill="#fff" fill-opacity=".8" />
                  <path d="m1018 701 6-6v-5h70v22h-70v-5z" fill="#444" stroke="#fff" />
                  <text class="tip" x="1027" y="706" fill="#fff">279.5878B</text>
                  <text class="tip" x="1098" y="706" fill="#444">BRA</text>
                  <path d="M994.500 674.500v17l4-4 3 6 3-1-3-6h6z" fill="#fff" stroke="#000" stroke-width="1.500" />
                </svg>
              </div>
            </section>

            <section class="panel">
              <div class="scroll-area">
                <div class="panel-head summary-head">
                  <button class="fold">&gt;&gt;</button>
                  <h2>Summary</h2>
                </div>
                <h3>Selected Indicator:</h3>
                <article class="chosen-indicator">
                  <b class="chosen-code">BX.GSR.GNFS.CD</b>
                  <h4>Exports of goods and services (BoP, current<br />US$)</h4>
                  <p>{{ indicatorText }}</p>
                </article>
                <div class="clear"><button class="btn">Clear Countries</button></div>
                <h3 class="second">Selected Countries:</h3>
                <article v-for="c in countries" :key="c.code" class="country">
                  <div class="country-head"><span class="badge">{{ c.code }}</span><h4>{{ c.name }}</h4></div>
                  <div class="country-info">
                    <svg width="87" :viewBox="c.flagBox" v-html="c.flag" />
                    <div>
                      <p><b>Native name:</b> {{ c.native }}</p>
                      <p><b>Capital:</b> {{ c.capital }}</p>
                      <p><b>Region:</b> {{ c.region[0] }}</p>
                      <p>{{ c.region[1] }}</p>
                    </div>
                  </div>
                  <dl class="stats">
                    <div><dt>Population:</dt><dd>{{ c.population }}</dd></div>
                    <div><dt>Area:</dt><dd>{{ c.area }}</dd></div>
                  </dl>
                  <p><b>Languages:</b> {{ c.languages }}</p>
                </article>
              </div>
              <div class="scrollbar"><i class="up" /><span class="thumb short" /><i class="down" /></div>
            </section>
          </div>
        </section>
      </main>
    </div>
  </div>
</template>

<style>
body {
  overflow: hidden;
}
</style>

<style scoped>
.desktop {
  display: flex;
  flex-direction: column;
  height: 100vh;
  font-family: "Noto Sans", sans-serif;
  font-size: 14px;
  color: #000;
}
.desktop * {
  box-sizing: border-box;
}
button {
  margin: 0;
  padding: 0;
  border: 0;
  background: none;
  color: inherit;
  font: inherit;
}
svg {
  display: block;
  flex: none;
}
h1, h2, h3, h4, p, ul, dl, dd {
  margin: 0;
  padding: 0;
  font-weight: 400;
}

/* desktop bar */
.topbar {
  display: grid;
  grid-template-columns: 1fr auto 1fr;
  align-items: center;
  flex: none;
  height: 28px;
  padding: 0 15px 2px 12px;
  background: linear-gradient(#57534b, #3f3d37);
  color: #dfdbd2;
}
.top-left, .top-right, .top-item {
  display: flex;
  align-items: center;
}
.top-left {
  gap: 20px;
}
.top-item {
  gap: 6px;
  font-size: 15px;
  font-weight: 600;
  line-height: 20px;
}
.clock {
  padding-left: 67px;
  font-size: 14px;
}
.top-right {
  justify-content: flex-end;
  gap: 12px;
}
.recorder {
  margin-right: 14px;
}
.lang {
  margin-right: 20px;
}

.workspace {
  display: flex;
  flex: 1;
  min-height: 0;
}
.dock {
  display: flex;
  flex-direction: column;
  gap: 2px;
  flex: none;
  width: 67px;
  padding: 0 2px 1px;
  background: linear-gradient(#4a5259, #51494f 22%, #454b50 38%, #3a3a38 48%, #2f2f2c 54%, #34373a 62%, #42484c 70%, #4a4344 82%, #3a3b3a);
}
.dock-item {
  position: relative;
  display: flex;
  align-items: center;
  justify-content: center;
  flex: none;
  width: 62px;
  height: 62px;
  border-radius: 4px;
}
.current {
  background: #5f6a73;
}
.apps {
  margin-top: auto;
}
.dots {
  position: absolute;
  left: 0;
  display: flex;
  flex-direction: column;
  gap: 3px;
}
.dots i {
  width: 5px;
  height: 5px;
  border-radius: 50%;
  background: #e95420;
}

/* browser window */
.window {
  display: flex;
  flex-direction: column;
  flex: 1;
  min-width: 0;
}
.titlebar {
  display: flex;
  align-items: center;
  flex: none;
  height: 36px;
  padding-left: 88px;
  border-bottom: 1px solid #000;
  background: #2d3436;
  color: #fff;
}
.window-title {
  flex: 1;
  text-align: center;
  font-weight: 700;
}
.window-buttons {
  display: flex;
  gap: 24px;
  padding-right: 13px;
}
.tabstrip {
  display: flex;
  flex: none;
  height: 34px;
  padding-left: 8px;
  background: #e8e8e8;
  border-bottom: 1px solid #a9a9a9;
}
.tab {
  display: flex;
  align-items: center;
  flex: 0 1 239px;
  min-width: 0;
  height: 33px;
  padding: 0 10px 0 13px;
  border-radius: 8px 8px 0 0;
  background: linear-gradient(#dcdcdc, #cdcdcd);
  box-shadow: inset -1px 0 #b5b5b5;
  text-align: left;
}
.tab.active {
  height: 34px;
  padding: 0 9px 2px 11px;
  border: 1px solid #a9a9a9;
  border-bottom: 0;
  background: #eee;
  box-shadow: none;
}
.tab-title {
  flex: 1;
  margin: 0 8px 0 7px;
  overflow: hidden;
  white-space: nowrap;
}
.fades {
  mask-image: linear-gradient(to right, #000 calc(100% - 32px), transparent);
}
.tab-close {
  margin-left: 4px;
}
.sound {
  margin-right: 6px;
}
.new-tab {
  display: flex;
  align-items: center;
  justify-content: center;
  width: 28px;
  height: 28px;
  margin: 3px 0 0 9px;
  border-radius: 50%;
  background: #d3d3d3;
}
.toolbar {
  display: flex;
  align-items: center;
  gap: 16px;
  flex: none;
  height: 36px;
  padding: 0 14px;
  background: #ebebeb;
}
.omnibox {
  display: flex;
  align-items: center;
  flex: 1;
  gap: 8px;
  height: 28px;
  padding: 0 8px;
  border-radius: 14px;
  background: #f1f3f5;
}
.address {
  flex: 1;
  min-width: 0;
  padding: 0;
  border: 0;
  outline: 0;
  background: linear-gradient(to right, #222 59px, #80868b 59px);
  background-clip: text;
  color: transparent;
  font: inherit;
}
.extensions {
  display: flex;
  align-items: center;
  gap: 16px;
}
.rule {
  width: 1px;
  height: 16px;
  margin: 0 -2px;
  background: #bbb;
}
.bookmarks {
  display: flex;
  align-items: center;
  gap: 16px;
  flex: none;
  height: 34px;
  padding: 0 14px 3px;
  border-bottom: 1px solid #999;
  background: #e5e5e5;
}
.bookmark {
  display: flex;
  align-items: center;
  gap: 8px;
  color: #000;
  font-size: 15px;
  line-height: 20px;
  text-decoration: none;
}
.other {
  margin-left: auto;
  padding-left: 11px;
  border-left: 1px solid #bbb;
}

/* web page */
.page {
  display: flex;
  flex-direction: column;
  flex: 1;
  min-height: 0;
  font-family: Lato, sans-serif;
}
.banner {
  flex: none;
  height: 73px;
  background: #21005c;
  color: #ffe4b5;
  font-size: 41px;
  line-height: 73px;
  text-align: center;
}
.columns {
  display: grid;
  grid-template-columns: minmax(0, 19fr) minmax(0, 36fr) minmax(0, 19fr);
  gap: 15px;
  flex: 1;
  min-height: 0;
  padding: 5px;
  border: 1px solid #000;
  background: #d3d3d3;
}
.panel {
  display: flex;
  min-height: 0;
  border: 1px solid #000;
  border-radius: 12px;
  background: #f5f5f5;
}
.scroll-area {
  flex: 1;
  min-width: 0;
  overflow: hidden;
}
.scrollbar {
  display: flex;
  flex-direction: column;
  align-items: center;
  flex: none;
  width: 15px;
  background: #f1f1f1;
}
.thumb {
  width: 12px;
  background: #c1c1c1;
}
.long {
  height: 82%;
}
.short {
  height: 22%;
}
.up, .down {
  width: 7px;
  height: 4px;
  background: #a3a3a3;
  clip-path: polygon(50% 0, 100% 100%, 0 100%);
}
.up {
  margin: 6px 0 5px;
}
.down {
  margin: auto 0 6px;
  background: #505050;
  clip-path: polygon(0 0, 100% 0, 50% 100%);
}
.panel-head {
  display: flex;
  align-items: center;
  height: 44px;
  padding: 0 4px;
}
.panel-head h2 {
  flex: 1;
  font-size: 26px;
  line-height: 32px;
  text-align: center;
}
.options-head h2 {
  padding-right: 8px;
}
.fold {
  font-size: 25px;
  line-height: 30px;
}
.modes {
  display: flex;
  justify-content: center;
  gap: 6px;
  height: 22px;
  font-size: 20px;
  line-height: 22px;
}
.modes label {
  display: flex;
  align-items: center;
  gap: 4px;
}
.modes input {
  appearance: none;
  width: 13px;
  height: 13px;
  margin: 0;
  border: 1px solid #aaa;
  border-radius: 50%;
  background: linear-gradient(#ddd, #eee);
}
.modes input:checked {
  background: radial-gradient(circle, #555 0 3px, #e8e8e8 4px);
}
.picker {
  position: relative;
  height: 20px;
}
.picker::after {
  content: "▼";
  position: absolute;
  top: 0;
  right: 4px;
  font: 10px/18px "DejaVu Sans", sans-serif;
  pointer-events: none;
}
.picker select {
  appearance: none;
  display: block;
  width: 100%;
  height: 20px;
  padding: 0 4px;
  border: 1px solid #a0a0a0;
  border-radius: 1px;
  background: linear-gradient(#f6f6f6, #dedede);
  color: #000;
  font: 13px "Liberation Sans", sans-serif;
}
.topic {
  width: 217px;
  margin: 10px auto;
}
.topic-text {
  margin: 0 10px;
  padding: 5px;
  border: 1px solid #000;
  border-radius: 5px;
  background: #d3d3d3;
  font-size: 15px;
  font-style: italic;
  line-height: 17px;
  white-space: pre-line;
}
.btn {
  height: 21px;
  padding: 0 8px;
  border: 1px solid #a0a0a0;
  border-radius: 1px;
  background: linear-gradient(#f6f6f6, #dedede);
  font: 13px "Liberation Sans", sans-serif;
}
.pager {
  display: flex;
  justify-content: center;
  margin: 4px 0 10px;
}
.indicators {
  padding: 0 29px;
  list-style: none;
}
.indicators li {
  margin-bottom: 10px;
  padding: 2px 0 2px 10px;
  border-bottom: 1px solid #000;
}
.indicators em {
  display: block;
  font-size: 15px;
  line-height: 19px;
}
.indicators strong {
  display: block;
  font-size: 18px;
  line-height: 22px;
  white-space: pre-line;
}
.chosen {
  background: #330089;
  color: #ffe4b5;
}

.plots {
  flex-direction: column;
  padding: 0 11px 11px;
}
.plots h2 {
  height: 68px;
  padding-top: 10px;
  font-size: 41px;
  line-height: 50px;
  text-align: center;
}
.controls {
  display: flex;
  align-items: center;
  justify-content: center;
  height: 20px;
  padding-left: 10px;
}
.controls select {
  font-weight: 700;
}
.kind {
  width: 96px;
  margin-right: 20px;
}
.year {
  width: 59px;
  margin-right: 10px;
}
.plot {
  flex: 1;
  min-height: 0;
  margin-top: 11px;
  background: #fff;
}
.map {
  width: 100%;
  height: 100%;
}
.ticks {
  fill: #444;
  font: 12px "Open Sans", sans-serif;
}
.tip {
  font: 13px "Liberation Sans", sans-serif;
}

.summary-head {
  height: 40px;
}
.summary-head h2 {
  padding-left: 10px;
  font-size: 27px;
}
h3 {
  margin-top: 21px;
  font-size: 23px;
  font-weight: 700;
  line-height: 30px;
  text-align: center;
}
.chosen-indicator {
  margin: 22px 9px 0;
  padding: 5px 6px;
  border: 1px solid #000;
  border-radius: 5px;
  background: #ebffff;
}
.chosen-code {
  display: block;
  font-size: 14px;
  line-height: 17px;
  text-align: center;
}
.chosen-indicator h4 {
  font-size: 20px;
  font-weight: 700;
  line-height: 24px;
  text-align: center;
}
.chosen-indicator p {
  font-size: 17px;
  font-style: italic;
  line-height: 20px;
  white-space: pre-line;
}
.clear {
  display: flex;
  justify-content: center;
  margin-top: 10px;
}
.second {
  margin: 22px 0 27px;
}
.country {
  margin: 0 18px 9px;
  padding: 3px 37px 2px;
  border: 1px solid #000;
  border-radius: 5px;
  background: #ebffff;
  font-size: 18px;
  line-height: 22px;
}
.country-head {
  display: flex;
}
.badge {
  padding: 4px 4px 0;
  border-radius: 5px;
  background: #330089;
  color: #ffe4b5;
  font-size: 21px;
  line-height: 26px;
}
.country h4 {
  flex: 1;
  padding-bottom: 5px;
  font-size: 25px;
  font-weight: 700;
  line-height: 31px;
  text-align: center;
  white-space: pre-line;
}
.country-info {
  display: flex;
  align-items: center;
  gap: 11px;
  margin-bottom: 4px;
}
.stats {
  display: grid;
  grid-template-columns: 3fr 2fr;
  margin-bottom: 4px;
}
.stats div {
  padding-left: 5px;
}
dt, b {
  font-weight: 700;
}
</style>
